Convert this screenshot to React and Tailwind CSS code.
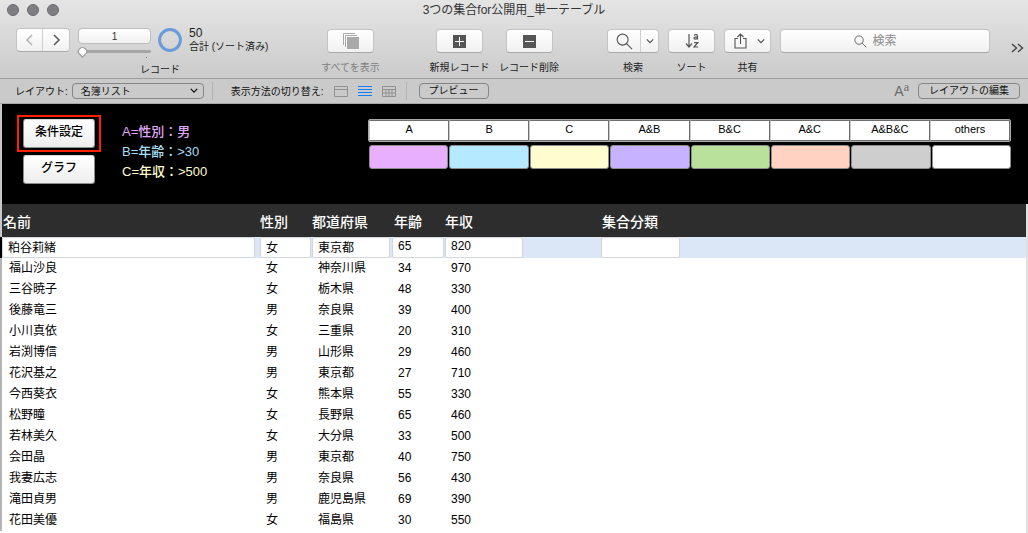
import React, { useState } from 'react';

const records = [
  { name: '粕谷莉緒', sex: '女', pref: '東京都', age: 65, income: 820 },
  { name: '福山沙良', sex: '女', pref: '神奈川県', age: 34, income: 970 },
  { name: '三谷暁子', sex: '女', pref: '栃木県', age: 48, income: 330 },
  { name: '後藤竜三', sex: '男', pref: '奈良県', age: 39, income: 400 },
  { name: '小川真依', sex: '女', pref: '三重県', age: 20, income: 310 },
  { name: '岩渕博信', sex: '男', pref: '山形県', age: 29, income: 460 },
  { name: '花沢基之', sex: '男', pref: '東京都', age: 27, income: 710 },
  { name: '今西葵衣', sex: '女', pref: '熊本県', age: 55, income: 330 },
  { name: '松野瞳', sex: '女', pref: '長野県', age: 65, income: 460 },
  { name: '若林美久', sex: '女', pref: '大分県', age: 33, income: 500 },
  { name: '会田晶', sex: '男', pref: '東京都', age: 40, income: 750 },
  { name: '我妻広志', sex: '男', pref: '奈良県', age: 56, income: 430 },
  { name: '滝田貞男', sex: '男', pref: '鹿児島県', age: 69, income: 390 },
  { name: '花田美優', sex: '女', pref: '福島県', age: 30, income: 550 },
];

const columns = [
  { key: 'name', label: '名前', col: 'w-[260px]', head: 'pl-px', input: 'w-[253px]' },
  { key: 'sex', label: '性別', col: 'w-[52px]', head: '', input: 'w-[51px]' },
  { key: 'pref', label: '都道府県', col: 'w-[80px]', head: '', input: 'w-[78px]' },
  { key: 'age', label: '年齢', col: 'w-[53px]', head: 'pl-0.5', input: 'w-[52px]' },
  { key: 'income', label: '年収', col: 'w-[156px]', head: '', input: 'w-[78px]' },
  { key: 'group', label: '集合分類', col: '', head: 'pl-px', input: 'w-[79px]' },
];

const groups = [
  { label: 'A', color: 'bg-[#e9afff]' },
  { label: 'B', color: 'bg-[#b5e9ff]' },
  { label: 'C', color: 'bg-[#fffcd0]' },
  { label: 'A&B', color: 'bg-[#c6b2ff]' },
  { label: 'B&C', color: 'bg-[#b9e19b]' },
  { label: 'A&C', color: 'bg-[#ffd2c2]' },
  { label: 'A&B&C', color: 'bg-[#cecece]' },
  { label: 'others', color: 'bg-white' },
];

const Chevron = ({ d = 'M1 1l4 4 4-4', className = 'w-2.5 h-1.5', box = '0 0 10 6' }) => (
  <svg viewBox={box} className={className} fill="none" stroke="currentColor" strokeWidth="1.6">
    <path d={d} />
  </svg>
);

const Magnifier = ({ className }) => (
  <svg viewBox="0 0 18 18" className={className} fill="none" stroke="currentColor" strokeWidth="1.2">
    <circle cx="7" cy="7" r="5.8" />
    <path d="M11.2 11.2L17 17" />
  </svg>
);

const toolFace = 'flex items-center justify-center h-6 rounded border border-[#c4c4c4] border-b-[#a9a9a9] bg-linear-to-b from-white to-[#f1f1f1] text-[#555]';

const ToolItem = ({ label, width, face = 'w-[47px]', disabled, children }) => (
  <div className={`flex flex-col items-center shrink-0 ${width}`}>
    <button aria-label={label} disabled={disabled} className={`${toolFace} ${face}`}>
      {children}
    </button>
    <span className={`mt-[7px] leading-4 whitespace-nowrap ${disabled ? 'text-[#808080]' : 'text-[#1c1c1c]'}`}>{label}</span>
  </div>
);

const TitleBar = () => (
  <div className="grid grid-cols-[1fr_auto_1fr] items-center h-5">
    <div className="flex gap-2 pl-[7px]">
      {['閉じる', '最小化', '拡大'].map((label) => (
        <button key={label} aria-label={label} className="w-3 h-3 rounded-full bg-[#7f7e82] border border-[#6b6a6e]" />
      ))}
    </div>
    <h1 className="text-xs leading-5 text-[#333]">3つの集合for公開用_単一テーブル</h1>
  </div>
);

const RecordNavigator = () => {
  const [record, setRecord] = useState(1);

  return (
    <div className="w-[304px] shrink-0 -mt-px">
      <div className="flex items-start">
        <div className="flex h-6 rounded border border-[#c4c4c4] border-b-[#a9a9a9] bg-linear-to-b from-white to-[#f1f1f1]">
          <button aria-label="前のレコード" className="w-[26px] flex items-center justify-center border-r border-[#cfcfcf] text-[#b4b4b4]">
            <Chevron d="M7 1L2 6l5 5" box="0 0 9 12" className="w-[9px] h-3" />
          </button>
          <button aria-label="次のレコード" className="w-[26px] flex items-center justify-center text-[#5e5e5e]">
            <Chevron d="M2 1l5 5-5 5" box="0 0 9 12" className="w-[9px] h-3" />
          </button>
        </div>
        <div className="w-[73px] ml-2">
          <input
            aria-label="レコード番号"
            value={record}
            onChange={(e) => setRecord(Number(e.target.value) || 1)}
            className="block w-full h-4 rounded-sm border border-[#bdbdbd] bg-linear-to-b from-white to-[#f1f1f1] text-center text-[#333]"
          />
          <input
            type="range"
            aria-label="レコード位置"
            min="1"
            max="50"
            value={record}
            onChange={(e) => setRecord(Number(e.target.value))}
            className="block w-full h-[3px] mt-[6px] appearance-none rounded bg-[#a5a5a5] [&::-webkit-slider-thumb]:appearance-none [&::-webkit-slider-thumb]:w-[9px] [&::-webkit-slider-thumb]:h-[9px] [&::-webkit-slider-thumb]:rounded-[4px_5px_4px_0px] [&::-webkit-slider-thumb]:-rotate-45 [&::-webkit-slider-thumb]:bg-white [&::-webkit-slider-thumb]:border [&::-webkit-slider-thumb]:border-[#8f8f8f]"
          />
          <div className="w-px h-px mt-1 ml-auto mr-1 bg-[#777]" />
        </div>
        <svg viewBox="0 0 24 24" className="w-6 h-6 ml-[7px]" fill="none">
          <circle cx="12" cy="12" r="10.4" stroke="#6b9bd8" strokeWidth="3" />
        </svg>
        <div className="ml-[7px] -mt-0.5 leading-[14px] text-[#1c1c1c] whitespace-nowrap">
          <p className="text-xs leading-[14px]">50</p>
          <p>合計 (ソート済み)</p>
        </div>
      </div>
      <p className="ml-[124px] mt-1 leading-4 text-[#1c1c1c]">レコード</p>
    </div>
  );
};

const Toolbar = () => (
  <div className="flex items-start pt-[9px] h-[58px] pl-4 pr-1">
    <RecordNavigator />
    <ToolItem label="すべてを表示" width="w-[61px]" disabled>
      <svg viewBox="0 0 16 16" className="w-4 h-4" fill="none" stroke="#a9a9a9">
        <path d="M.5 12V.5H12M2.5 14V2.5H14" />
        <path d="M4 4h12v12H4z" fill="#a9a9a9" stroke="none" />
      </svg>
    </ToolItem>
    <div className="flex gap-[9px] ml-12">
      <ToolItem label="新規レコード" width="w-[61px]">
        <svg viewBox="0 0 13 13" className="w-[13px] h-[13px]">
          <path d="M0 0h13v13H0z" fill="#555" />
          <path d="M2 6.5h9M6.5 2v9" stroke="#fff" />
        </svg>
      </ToolItem>
      <ToolItem label="レコード削除" width="w-[60px]">
        <svg viewBox="0 0 13 13" className="w-[13px] h-[13px]">
          <path d="M0 0h13v13H0z" fill="#555" />
          <path d="M2 6.5h9" stroke="#fff" />
        </svg>
      </ToolItem>
    </div>
    <div className="flex flex-1 gap-[9px] ml-12">
      <ToolItem label="検索" width="w-[52px]" face="w-[52px]">
        <span className="flex-1 flex justify-center">
          <Magnifier className="w-[17px] h-[17px]" />
        </span>
        <span className="flex items-center justify-center w-[18px] h-full border-l border-[#cfcfcf]">
          <Chevron className="w-2 h-1.5" />
        </span>
      </ToolItem>
      <ToolItem label="ソート" width="w-[47px]">
        <svg viewBox="0 0 14 16" className="w-[14px] h-4" fill="none" stroke="currentColor" strokeWidth="1.2">
          <path d="M4 1v13M1 10.5L4 14l3-3.5" />
          <path d="M9.2 2.400C9.800 1.200 12.500 1.100 12.500 3v3.500M12.500 3.900C10.500 3.900 9 4.200 9 5.200s2.500 1.300 3.500-.2M9 9.600h3.800L9 14h4.200" />
        </svg>
      </ToolItem>
      <ToolItem label="共有" width="w-[47px]">
        <span className="flex items-center gap-2.5 pl-1">
          <svg viewBox="0 0 13 16" className="w-[13px] h-4" fill="none" stroke="currentColor" strokeWidth="1.1">
            <path d="M4 5.500H1v9.500h11V5.500H9M6.500 11V1M3.500 4l3-3 3 3" />
          </svg>
          <Chevron className="w-2 h-1.5" />
        </span>
      </ToolItem>
      <label className={`${toolFace} flex-1 gap-1.5`}>
        <Magnifier className="w-[13px] h-[13px]" />
        <input type="search" aria-label="検索" placeholder="検索" className="w-11 text-xs outline-none placeholder:text-[#8c8c8c]" />
      </label>
    </div>
    <button aria-label="その他のツール" className="ml-[21px] mt-3.5 text-[#444]">
      <svg viewBox="0 0 13 10" className="w-[13px] h-2.5" fill="none" stroke="currentColor" strokeWidth="1.4">
        <path d="M1 1l4.500 4L1 9M7 1l4.500 4L7 9" />
      </svg>
    </button>
  </div>
);

const LayoutBar = () => (
  <div className="flex items-center h-[26px] pl-[15px] pr-2 bg-[#cacaca] border-t border-t-[#9d9d9d] border-b border-b-[#a8a8a8] text-[#111] whitespace-nowrap">
    <label htmlFor="layout">レイアウト:</label>
    <div className="relative ml-1">
      <select id="layout" className="block w-[132px] h-4 pl-2 appearance-none rounded border border-[#858585]">
        <option>名簿リスト</option>
      </select>
      <Chevron className="absolute right-1.5 top-[5px] w-2 h-[5px] pointer-events-none" />
    </div>
    <div className="w-px h-[18px] ml-2 mr-[18px] bg-[#b2b2b2]" />
    <span>表示方法の切り替え:</span>
    <div className="flex gap-2.5 ml-2.5">
      <button aria-label="フォーム形式">
        <svg viewBox="0 0 14 11" className="w-[14px] h-[11px]" fill="none" stroke="#929292">
          <path d="M.5.5h13v10H.5zM.5 3.500h13" />
        </svg>
      </button>
      <button aria-label="リスト形式">
        <svg viewBox="0 0 14 11" className="w-[14px] h-[11px]" fill="none" stroke="#157efb">
          <path d="M0 .5h14M0 3.500h14M0 6.500h14M0 9.500h14" />
        </svg>
      </button>
      <button aria-label="表形式">
        <svg viewBox="0 0 14 11" className="w-[14px] h-[11px]" fill="none" stroke="#929292">
          <path d="M.5.5h13v10H.5zM.5 3.500h13M.5 7h13M4 3.500v7M7 3.500v7M10 3.500v7" />
        </svg>
      </button>
    </div>
    <div className="w-px h-[18px] ml-2.5 mr-3 bg-[#b2b2b2]" />
    <button className="w-[70px] h-4 rounded border border-[#858585] leading-[14px]">プレビュー</button>
    <button aria-label="書式設定バー" className="flex items-start ml-auto mr-[9px] text-[#6b6b6b]">
      <span className="text-sm leading-4">A</span>
      <span className="font-['Liberation_Serif',serif] text-xs leading-2">a</span>
    </button>
    <button className="w-[102px] h-4 rounded border border-[#858585] leading-[14px]">レイアウトの編集</button>
  </div>
);

const panelButton = 'w-[72px] h-[29px] rounded-[3px] border border-[#8c8c8c] border-t-[#d8d8d8] bg-linear-to-b from-white to-[#ededed] text-xs font-medium text-black pb-[3px]';

const ConditionPanel = () => (
  <section className="flex h-[100px] pt-[11px] pl-[15px] pr-4 bg-black border-l-2 border-[#c8c8c8]">
    <div>
      <div className="p-0.5 px-1 border-2 border-[#ff1e00]">
        <button className={`block ${panelButton}`}>条件設定</button>
      </div>
      <button className={`block ml-1.5 mt-[3px] ${panelButton}`}>グラフ</button>
    </div>
    <div className="ml-[21px] mt-[7px] text-[13px] leading-5 font-medium">
      <p className="text-[#e0a8f8]">A=性別：男</p>
      <p className="text-[#a8dff6]">B=年齢：&gt;30</p>
      <p className="text-[#fffcd0]">C=年収：&gt;500</p>
    </div>
    <div className="w-[643px] mt-1 mr-px ml-auto text-[11px] text-black">
      <div className="grid grid-cols-8 rounded-xs border border-[#a9a9a9]">
        {groups.map((g) => (
          <div key={g.label} className="h-[21px] border border-[#6e6e6e] border-l-[#c9c9c9] bg-white text-center leading-4">
            {g.label}
          </div>
        ))}
      </div>
      <div className="grid grid-cols-8 gap-px mt-[3px] pl-px">
        {groups.map((g) => (
          <button key={g.label} aria-label={g.label} className={`h-6 rounded-[3px] border border-[#8e8e8e] ${g.color}`} />
        ))}
      </div>
    </div>
  </section>
);

const RecordTable = () => (
  <main className="flex-1 border-r-2 border-[#e0e0e0]">
    <table className="w-full table-fixed border-separate border-spacing-0 text-left text-xs text-black">
      <thead className="bg-[#2d2d2d] text-sm text-white">
        <tr>
          {columns.map((c) => (
            <th key={c.key} className={`h-[33px] p-0 pt-0.5 font-medium first:border-l-2 first:border-[#c8c8c8] ${c.col} ${c.head}`}>{c.label}</th>
          ))}
        </tr>
      </thead>
      <tbody>
        {records.map((r, i) => (
          <tr key={r.name} className={i === 0 ? 'bg-[#dbe7f7]' : ''}>
            {columns.map((c) => (
              <td key={c.key} className={`h-[21px] p-0 leading-[18px] first:border-l-2 ${i === 0 ? 'first:border-black' : 'pl-1.5 pb-0.5 first:pl-[7px] first:border-[#b4b4b4]'}`}>
                {i === 0 ? (
                  <input
                    aria-label={c.label}
                    defaultValue={r[c.key]}
                    className={`block h-[21px] pl-[5px] pb-[3px] rounded-xs border border-[#d3d7dc] bg-white ${c.key === 'name' ? 'pl-1.5' : ''} ${c.input}`}
                  />
                ) : (
                  r[c.key]
                )}
              </td>
            ))}
          </tr>
        ))}
      </tbody>
    </table>
  </main>
);

export default function App() {
  return (
    <div className="flex flex-col min-h-screen bg-white text-[10px] font-['Liberation_Sans','Noto_Sans_CJK_JP',sans-serif]">
      <header>
        <div className="bg-linear-to-b from-[#e5e5e5] to-[#cbcbcb]">
          <TitleBar />
          <Toolbar />
        </div>
        <LayoutBar />
      </header>
      <ConditionPanel />
      <RecordTable />
    </div>
  );
}
